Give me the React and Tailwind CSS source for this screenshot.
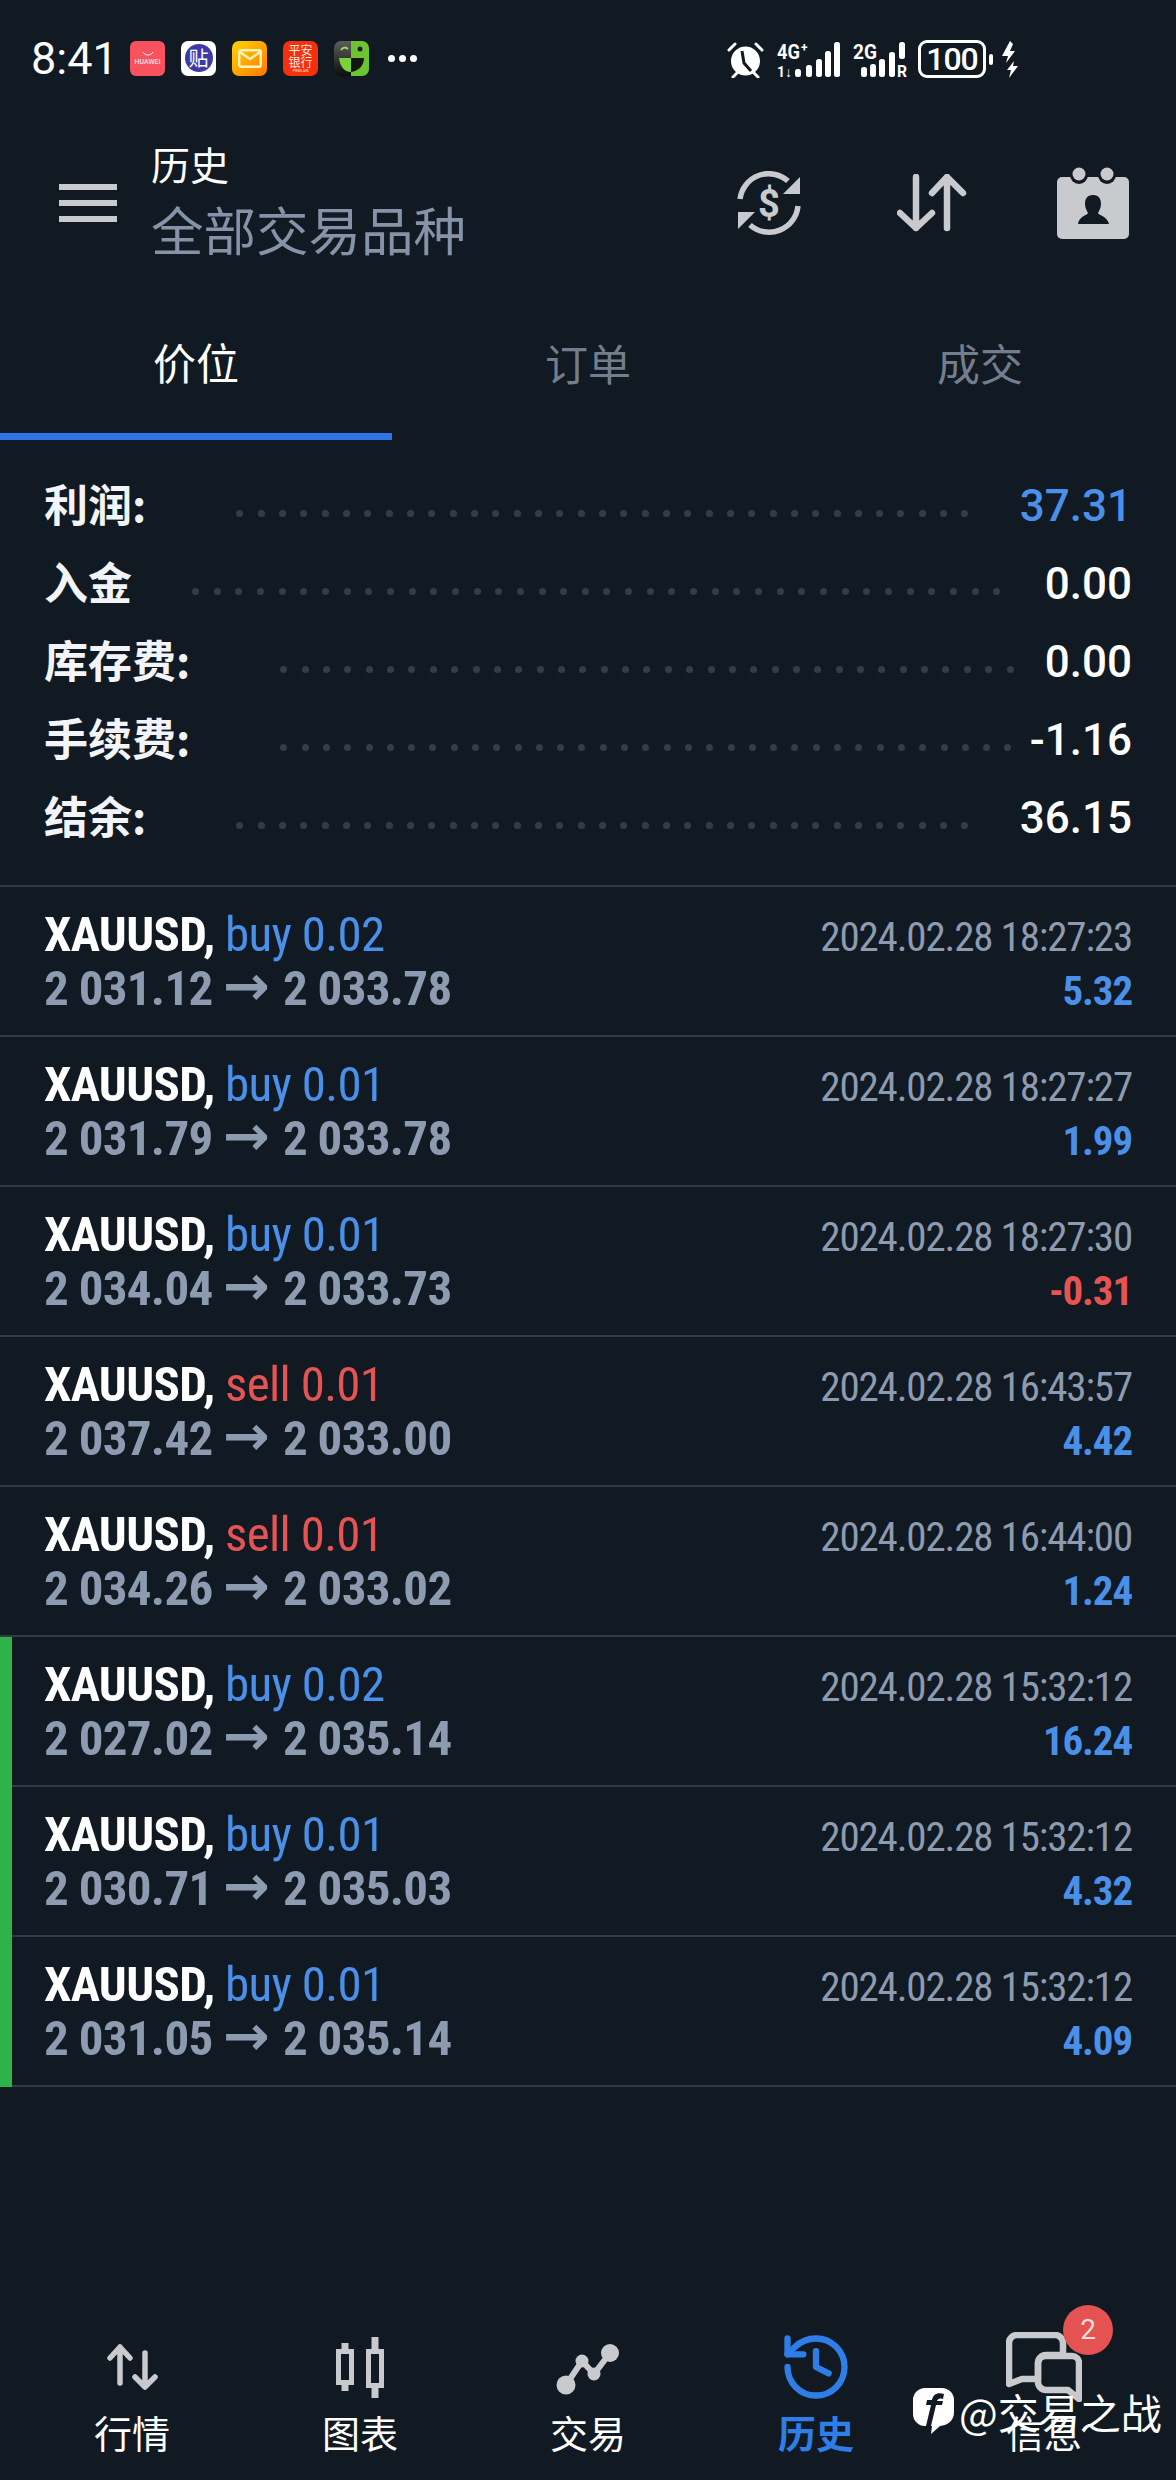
import React from "react";
import { History } from "lucide-react";

const CJK = "font-['Noto_Sans_CJK_SC',sans-serif]";
const NUM = "font-['Roboto','Noto_Sans_CJK_SC',sans-serif]";

const summary = [
  { label: "利润:", value: "37.31", color: "text-[#4a90e8]", dots: 35, gap: "ml-[90px] mr-[51px]" },
  { label: "入金", value: "0.00", color: "text-white", dots: 38, gap: "ml-[60px] mr-[44px]" },
  { label: "库存费:", value: "0.00", color: "text-white", dots: 35, gap: "ml-[90px] mr-[31px]" },
  { label: "手续费:", value: "-1.16", color: "text-white", dots: 35, gap: "ml-[90px] mr-[18px]" },
  { label: "结余:", value: "36.15", color: "text-white", dots: 35, gap: "ml-[90px] mr-[51px]" },
];

const deals = [
  { side: "buy 0.02", from: "2 031.12", to: "2 033.78", time: "2024.02.28 18:27:23", profit: "5.32" },
  { side: "buy 0.01", from: "2 031.79", to: "2 033.78", time: "2024.02.28 18:27:27", profit: "1.99" },
  { side: "buy 0.01", from: "2 034.04", to: "2 033.73", time: "2024.02.28 18:27:30", profit: "-0.31" },
  { side: "sell 0.01", from: "2 037.42", to: "2 033.00", time: "2024.02.28 16:43:57", profit: "4.42" },
  { side: "sell 0.01", from: "2 034.26", to: "2 033.02", time: "2024.02.28 16:44:00", profit: "1.24" },
  { side: "buy 0.02", from: "2 027.02", to: "2 035.14", time: "2024.02.28 15:32:12", profit: "16.24", open: true },
  { side: "buy 0.01", from: "2 030.71", to: "2 035.03", time: "2024.02.28 15:32:12", profit: "4.32", open: true },
  { side: "buy 0.01", from: "2 031.05", to: "2 035.14", time: "2024.02.28 15:32:12", profit: "4.09", open: true },
];

const AppIcons = () => (
  <div className="flex items-center gap-[16px]">
    <div className="flex h-[35px] w-[35px] flex-col items-center justify-center rounded-[6px] bg-[#f9525f]">
      <svg width="14" height="6" viewBox="0 0 14 6"><path d="M2 1c2 4 8 4 10 0" fill="none" stroke="#fff" strokeWidth="1" /></svg>
      <span className="mt-[1px] font-['Roboto',sans-serif] text-[7px] leading-[8px] font-medium text-[#ffe3e6]">HUAWEI</span>
    </div>
    <div className="flex h-[35px] w-[35px] items-center justify-center rounded-[7px] bg-white">
      <div className="flex h-[28px] w-[28px] items-center justify-center rounded-full bg-[#3f3aa6] font-['Noto_Sans_CJK_SC',sans-serif] text-[20px] leading-none text-white">贴</div>
    </div>
    <div className="flex h-[35px] w-[35px] items-center justify-center rounded-[7px] bg-gradient-to-br from-[#ffd400] to-[#ff7400]">
      <svg width="24" height="19" viewBox="0 0 24 19" fill="none" stroke="#fff3b8" strokeWidth="2.4"><rect x="1.2" y="1.2" width="21.6" height="16.6" rx="2" /><path d="M2 3l10 7 10-7" /></svg>
    </div>
    <div className="flex h-[35px] w-[35px] flex-col items-center justify-center rounded-[7px] bg-[#f5300c] font-['Noto_Sans_CJK_SC',sans-serif] text-[12px] leading-[12px] text-[#ffe9dc]">
      <span>平安</span>
      <span>银行</span>
      <span className="font-['Roboto',sans-serif] text-[4px] leading-[5px]">PING AN</span>
    </div>
    <svg width="35" height="35" viewBox="0 0 35 35">
      <defs>
        <linearGradient id="faceDark" x1="0" y1="0" x2="0" y2="1">
          <stop offset="0" stopColor="#5b5e5a" />
          <stop offset="1" stopColor="#0c0e0c" />
        </linearGradient>
      </defs>
      <path d="M7 0h11v35H7a7 7 0 0 1-7-7V7a7 7 0 0 1 7-7z" fill="url(#faceDark)" />
      <path d="M17 0h11a7 7 0 0 1 7 7v21a7 7 0 0 1-7 7H17z" fill="#6cc433" />
      <path d="M5 17h12v14c-7 0-11-6-12-14z" fill="#7ad23c" />
      <path d="M17 17h13c0 8-6 13-13 14z" fill="#111611" />
      <circle cx="26" cy="8" r="2.5" fill="#1a221a" />
      <path d="M7 9c2-3 5-3 7-1" fill="none" stroke="#9be255" strokeWidth="2" />
    </svg>
    <div className="ml-[3px] flex gap-[4px]">
      <span className="h-[7px] w-[7px] rounded-full bg-white" />
      <span className="h-[7px] w-[7px] rounded-full bg-white" />
      <span className="h-[7px] w-[7px] rounded-full bg-white" />
    </div>
  </div>
);

const StatusRight = () => (
  <div className="absolute top-[40px] left-[727px] flex items-center">
    <svg width="37" height="37" viewBox="0 0 37 37" fill="#fff">
      <circle cx="18.5" cy="20" r="14.5" />
      <path d="M15 10l2 12 7 8" fill="none" stroke="#111922" strokeWidth="3" />
      <path d="M2 9l6-6M35 9l-6-6M6 36l4-4M31 36l-4-4" stroke="#fff" strokeWidth="3" strokeLinecap="round" />
    </svg>
    <svg className="ml-[13px]" width="65" height="37" viewBox="0 0 65 37" fill="#fff">
      <text x="0" y="18" fontFamily="Roboto" fontWeight="700" fontSize="21" textLength="23" lengthAdjust="spacingAndGlyphs">4G</text>
      <text x="24" y="11" fontFamily="Roboto" fontWeight="700" fontSize="12">+</text>
      <text x="0" y="36" fontFamily="Roboto" fontWeight="700" fontSize="14" textLength="15" lengthAdjust="spacingAndGlyphs">1↓</text>
      <rect x="18" y="28" width="6" height="8" rx="2.5" />
      <rect x="29" y="24" width="6" height="12" rx="2.5" />
      <rect x="39" y="18" width="6" height="18" rx="2.5" />
      <rect x="48" y="10" width="6" height="26" rx="2.5" />
      <rect x="57" y="1" width="6" height="35" rx="2.5" />
    </svg>
    <svg className="ml-[11px]" width="54" height="37" viewBox="0 0 54 37" fill="#fff">
      <text x="0" y="18" fontFamily="Roboto" fontWeight="700" fontSize="21" textLength="24" lengthAdjust="spacingAndGlyphs">2G</text>
      <rect x="8" y="26" width="6" height="10" rx="2.5" />
      <rect x="17" y="23" width="6" height="13" rx="2.5" />
      <rect x="26" y="18" width="6" height="18" rx="2.5" />
      <rect x="36" y="11" width="6" height="25" rx="2.5" />
      <rect x="46" y="1" width="6" height="17" rx="2.5" />
      <text x="44" y="36" fontFamily="Roboto" fontWeight="700" fontSize="16" textLength="10" lengthAdjust="spacingAndGlyphs">R</text>
    </svg>
    <div className="ml-[11px] flex h-[38px] w-[68px] items-center justify-center rounded-[9px] border-[3px] border-white font-['Roboto',sans-serif] text-[32px] leading-none font-medium tracking-[-1px] text-white">100</div>
    <div className="ml-[3px] h-[11px] w-[4px] rounded-full bg-white" />
    <svg className="ml-[9px]" width="16" height="37" viewBox="0 0 16 37" fill="#fff">
      <path d="M8 0L0 15h6l-2 7 9-12H8l3-7zM12 20l-7 9h4l-2 8 9-12h-5z" />
    </svg>
  </div>
);

const HeaderIcons = () => (
  <div className="ml-auto flex items-center">
    <svg width="64" height="64" viewBox="0 0 64 64" fill="none" stroke="#c8cacd" strokeWidth="5.5">
      <path d="M3 28A29 29 0 0 1 51 10" />
      <path d="M61 35A29 29 0 0 1 13 54" />
      <path d="M63 6v17H46zM1 58V41h17z" fill="#c8cacd" stroke="none" />
      <text x="32" y="46" textAnchor="middle" fontFamily="Roboto" fontWeight="700" fontSize="38" fill="#c8cacd" stroke="none">$</text>
    </svg>
    <svg className="ml-[96px]" width="70" height="58" viewBox="0 0 70 58" fill="none" stroke="#c8cacd" strokeWidth="6.5" strokeLinecap="round" strokeLinejoin="round">
      <path d="M19 3v51M3 39l16 15 16-15" />
      <path d="M50 3v51M35 19L50 3l16 16" />
    </svg>
    <svg className="ml-[90px]" width="72" height="72" viewBox="0 0 72 72">
      <rect x="0" y="10" width="72" height="62" rx="5" fill="#c8cacd" />
      <circle cx="22" cy="8" r="9" fill="#111922" />
      <circle cx="50" cy="8" r="9" fill="#111922" />
      <circle cx="22" cy="7" r="6.5" fill="#c8cacd" />
      <circle cx="50" cy="7" r="6.5" fill="#c8cacd" />
      <path d="M36 28c6 0 8 4 8 9 0 4-2 7-3 9 0 2 9 3 11 11H21c1-8 10-9 10-11-1-2-3-5-3-9 0-5 2-9 8-9z" fill="#111922" />
    </svg>
  </div>
);

const NavIcon = ({ name }) => {
  if (name === "quotes") {
    return (
      <svg width="51" height="46" viewBox="0 0 51 46" fill="none" stroke="#c8cacd" strokeWidth="5.5" strokeLinecap="round" strokeLinejoin="round">
        <path d="M13 3v36M3 14L13 3l10 11" />
        <path d="M38 9v34M28 33l10 10 10-10" />
      </svg>
    );
  }
  if (name === "chart") {
    return (
      <svg width="49" height="61" viewBox="0 0 49 61" fill="none" stroke="#c8cacd">
        <path d="M9 6v48M39 0v61" strokeWidth="7" />
        <rect x="2.5" y="14.5" width="13" height="31" fill="#111922" strokeWidth="5" />
        <rect x="32.5" y="14.5" width="13" height="34" fill="#111922" strokeWidth="5" />
      </svg>
    );
  }
  if (name === "trade") {
    return (
      <svg width="64" height="56" viewBox="0 0 64 56" fill="#c8cacd">
        <path d="M10 46L26 22l12 13L54 14" fill="none" stroke="#c8cacd" strokeWidth="6" />
        <circle cx="10" cy="46" r="9.5" />
        <circle cx="26" cy="22" r="6.5" />
        <circle cx="38" cy="35" r="6.5" />
        <circle cx="54" cy="14" r="9" />
      </svg>
    );
  }
  if (name === "history") {
    return <History size={76} strokeWidth={2} color="#2f7de6" />;
  }
  return (
    <svg width="76" height="70" viewBox="0 0 76 70" fill="none" stroke="#c8cacd" strokeWidth="6.5" strokeLinejoin="round">
      <path d="M11 3h38a8 8 0 0 1 8 8v12H40a8 8 0 0 0-8 8v16H16L3 52V11a8 8 0 0 1 8-8z" />
      <path d="M40 24h26a7 7 0 0 1 7 7v36l-11-9H40a8 8 0 0 1-8-8V31a8 8 0 0 1 8-7z" />
    </svg>
  );
};

const nav = [
  { name: "quotes", label: "行情" },
  { name: "chart", label: "图表" },
  { name: "trade", label: "交易" },
  { name: "history", label: "历史", active: true },
  { name: "messages", label: "信息", badge: "2" },
];

const DealRow = ({ deal }) => {
  const body = (
    <div className={`flex h-[150px] flex-1 items-start justify-between border-b-2 border-[#333b46] pr-[44px] ${deal.open ? "pl-[32px]" : "pl-[44px]"}`}>
      <div className="pt-[21px] font-['Roboto',sans-serif] text-[49px] leading-[54px] tracking-[-0.7px] [font-stretch:75%]">
        <div className="font-bold text-white">
          XAUUSD, <span className={`font-normal ${deal.side.startsWith("buy") ? "text-[#4a90e8]" : "text-[#e55353]"}`}>{deal.side}</span>
        </div>
        <div className="font-bold text-[#8d9bb0]">
          {deal.from} <span className="mr-[3px] font-['DejaVu_Sans',sans-serif] text-[56px] leading-[0px] [font-stretch:100%]">→</span> {deal.to}
        </div>
      </div>
      <div className="pt-[23px] text-right font-['Roboto',sans-serif] text-[41px] leading-[54px] tracking-[-1.15px] [font-stretch:75%]">
        <div className="text-[#8d9bb0]">{deal.time}</div>
        <div className={`font-bold ${deal.profit.startsWith("-") ? "text-[#e55353]" : "text-[#4a90e8]"}`}>{deal.profit}</div>
      </div>
    </div>
  );
  if (!deal.open) return <div className="flex">{body}</div>;
  return (
    <div className="flex">
      <div className="w-[12px] bg-[#2eb24a]" />
      {body}
    </div>
  );
};

export default function App() {
  return (
    <div className={`relative flex h-[2480px] w-[1176px] flex-col overflow-hidden bg-[#111922] ${CJK}`}>
      {/* status bar */}
      <div className="flex h-[116px] items-center pl-[31px]">
        <span className={`${NUM} w-[99px] text-[45px] leading-none text-white`}>8:41</span>
        <AppIcons />
      </div>
      <StatusRight />

      {/* header */}
      <div className="flex h-[174px] items-center pr-[47px] pl-[59px]">
        <div className="flex flex-col gap-[10px]">
          <span className="h-[6px] w-[58px] bg-[#c8cacd]" />
          <span className="h-[6px] w-[58px] bg-[#c8cacd]" />
          <span className="h-[6px] w-[58px] bg-[#c8cacd]" />
        </div>
        <div className="ml-[34px] pb-[6px]">
          <div className="mb-[10px] text-[39px] leading-[46px] text-white">历史</div>
          <div className="text-[52.5px] leading-[64px] text-[#8493a8]">全部交易品种</div>
        </div>
        <HeaderIcons />
      </div>

      {/* tabs */}
      <div className="grid h-[150px] grid-cols-3">
        <div className="flex items-center justify-center border-b-[7px] border-[#2f74e8] text-[43px] text-white">价位</div>
        <div className="flex items-center justify-center pb-[6px] text-[43px] text-[#737e8d]">订单</div>
        <div className="flex items-center justify-center pb-[6px] text-[43px] text-[#737e8d]">成交</div>
      </div>

      {/* summary */}
      <div className="px-[44px] pt-[27px] pb-[28px]">
        {summary.map((row) => (
          <div key={row.label} className="flex h-[78px] items-center">
            <span className="mb-[6px] text-[44px] leading-none font-bold text-[#f2f4f7]">{row.label}</span>
            <div className={`mt-[14px] flex flex-1 justify-between ${row.gap}`}>
              {Array.from({ length: row.dots }).map((_, i) => (
                <span key={i} className="h-[7px] w-[7px] rounded-full bg-[#353c47]" />
              ))}
            </div>
            <span className={`${NUM} text-[44px] leading-none font-medium ${row.color}`}>{row.value}</span>
          </div>
        ))}
      </div>

      {/* deals */}
      <div className="border-t-2 border-[#333b46]">
        {deals.map((deal, i) => (
          <DealRow key={i} deal={deal} />
        ))}
      </div>

      <div className="flex-1" />

      {/* bottom nav */}
      <div className="grid h-[149px] grid-cols-5 px-[18px] pb-[30px]">
        {nav.map((item) => (
          <div key={item.name} className="relative flex flex-col items-center">
            <div className="flex h-[72px] items-center justify-center">
              <NavIcon name={item.name} />
            </div>
            <span className={`mt-[10px] text-[38px] leading-[38px] ${item.active ? "font-bold text-[#2f7de6]" : "text-white"}`}>{item.label}</span>
            {item.badge && (
              <span className={`${NUM} absolute top-[-26px] left-[133px] flex h-[50px] w-[50px] items-center justify-center rounded-full bg-[#e45252] text-[28px] leading-none text-[#fbdcdc]`}>
                {item.badge}
              </span>
            )}
          </div>
        ))}
      </div>

      {/* watermark */}
      <div className="absolute top-[2388px] left-[913px] flex items-center">
        <svg width="41" height="46" viewBox="0 0 41 46">
          <path d="M12 0h17a12 12 0 0 1 12 12v12c0 9-6 13-14 14l-9 8 1-8h-7A12 12 0 0 1 0 26V12A12 12 0 0 1 12 0z" fill="#fff" />
          <path d="M13 38l5-21h-5l1-5h5c1-5 5-8 12-6l-1 5c-4-1-5 0-6 2v-1 1h6l-1 4h-6l-5 21z" fill="#111922" />
        </svg>
        <span className="ml-[5px] text-[41px] leading-[46px] text-white">@交易之战</span>
      </div>
    </div>
  );
}
